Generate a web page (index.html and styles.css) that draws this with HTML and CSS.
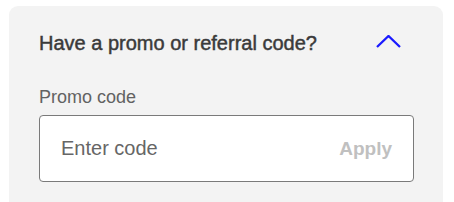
FILE: index.html
```html
<!DOCTYPE html>
<html>
<head>
<meta charset="utf-8">
<link rel="stylesheet" href="styles.css">
</head>
<body>
<section class="card">
  <div class="head">
    <h2 class="title">Have a promo or referral code?</h2>
    <svg class="chev" width="26" height="14" viewBox="0 0 26 14"><path d="M1 12 L12.5 1 L24 12" fill="none" stroke="#1a1aff" stroke-width="2.3"/></svg>
  </div>
  <label class="label">Promo code</label>
  <div class="field">
    <span class="placeholder">Enter code</span>
    <span class="apply">Apply</span>
  </div>
</section>
</body>
</html>
```
FILE: styles.css
```css
html, body { margin: 0; padding: 0; background: #fff; }
body { font-family: "Liberation Sans", Arial, sans-serif; overflow: hidden; height: 202px; }
.card {
  box-sizing: border-box;
  margin: 6px 11px 0 9px;
  background: #f3f3f3;
  border-radius: 9px 9px 0 0;
  padding: 25px 29px 0 30px;
  height: 196px;
}
.head { display: flex; align-items: flex-start; justify-content: space-between; padding-right: 12px; }
.title { margin: 0; font-size: 20px; line-height: 24px; font-weight: 400; color: #3a3a3a; -webkit-text-stroke: 0.45px #3a3a3a; }
.chev { display: block; margin-top: 4px; }
.label { display: block; margin-top: 32px; font-size: 18px; line-height: 20px; color: #626262; }
.field {
  margin-top: 8px;
  height: 65px;
  background: #fff;
  border: 1px solid #7a7a7a;
  border-radius: 4px;
  display: flex; align-items: center; justify-content: space-between;
  padding: 0 21px 0 21px;
}
.placeholder { font-size: 20px; color: #666; }
.apply { font-size: 19px; font-weight: 700; color: #c0c0c0; }
```
